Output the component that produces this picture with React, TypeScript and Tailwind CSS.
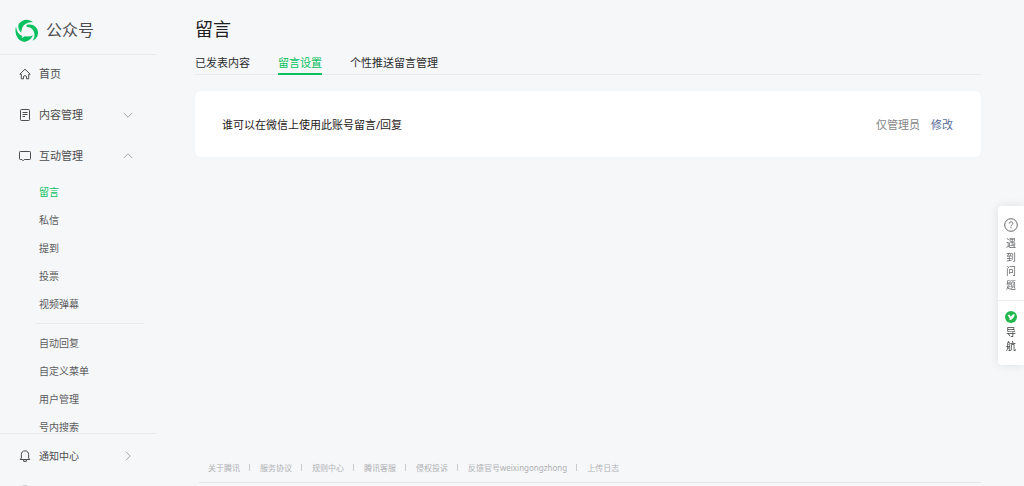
import { useState } from "react";
import type { ReactNode } from "react";

const interactionItems = ["留言", "私信", "提到", "投票", "视频弹幕"];
const toolItems = ["自动回复", "自定义菜单", "用户管理", "号内搜索"];
const tabs = ["已发表内容", "留言设置", "个性推送留言管理"];
const footerLinks = [
  "关于腾讯",
  "服务协议",
  "规则中心",
  "腾讯客服",
  "侵权投诉",
  "反馈官号weixingongzhong",
  "上传日志",
];

function Logo() {
  return (
    <svg viewBox="0 0 68 68" className="size-[23px]" fill="#07c160" aria-hidden="true">
      <path d="M11 15C20 1 40 -3 54 10C40 9 26 14 21 28C19 33 18 37 19 41C11 35 8 24 11 15Z" />
      <path d="M3 22C5 38 13 48 22 50L19 57L29 51C38 53 46 52 53 48C47 62 34 69 24 67C8 64 -3 44 3 22Z" />
      <path d="M36 17C54 13 66 24 68 38C69 50 62 60 52 64C59 54 59 44 55 36C51 28 44 24 36 24C33 22 33 19 36 17Z" />
    </svg>
  );
}

function Icon({ children }: { children: ReactNode }) {
  return (
    <svg
      viewBox="0 0 12 12"
      className="size-3 shrink-0"
      fill="none"
      stroke="#4c4d4e"
      strokeWidth="1"
      strokeLinejoin="round"
      aria-hidden="true"
    >
      {children}
    </svg>
  );
}

function Chevron({ d }: { d: string }) {
  return (
    <svg
      viewBox="0 0 10 10"
      className="ml-auto size-[10px]"
      fill="none"
      stroke="#a3a4a5"
      strokeWidth="1"
      aria-hidden="true"
    >
      <path d={d} />
    </svg>
  );
}

interface SubMenuProps {
  items: string[];
  active: string;
  onSelect: (item: string) => void;
}

function SubMenu(props: SubMenuProps) {
  return (
    <ul>
      {props.items.map((item) => (
        <li key={item}>
          <button
            type="button"
            onClick={() => props.onSelect(item)}
            className={`block h-7 cursor-pointer pl-[39px] text-[10px] ${
              item === props.active ? "text-[#07c160]" : "text-[#5b5c5d]"
            }`}
          >
            {item}
          </button>
        </li>
      ))}
    </ul>
  );
}

function Sidebar() {
  const [active, setActive] = useState("留言");
  const [open, setOpen] = useState(true);
  const row =
    "flex h-5 w-full cursor-pointer items-center gap-2 pl-[19px] pr-[23px] text-[11px] text-[#4c4d4e]";
  return (
    <aside className="flex h-full w-[156px] shrink-0 flex-col">
      <div className="flex h-[55px] shrink-0 items-center gap-2 border-b border-[#e9eaec] pl-[15px] pt-1.5 text-base text-[#4c4d4e]">
        <Logo />
        公众号
      </div>
      <nav className="min-h-0 flex-1 overflow-hidden pt-[9px]">
        <div className="flex flex-col gap-[21px]">
          <a href="#home" className={row}>
            <Icon>
              <path d="M0.800 6.200L6 1.200L11.200 6.200H9.700V10.800H7.500V8.300Q6 6.900 4.500 8.300V10.800H2.300V6.200Z" />
            </Icon>
            首页
          </a>
          <button type="button" className={row}>
            <Icon>
              <rect x="1.500" y="0.500" width="9" height="11" rx="0.800" />
              <path d="M3.500 3.500H8.500M3.500 5.500H8.500M3.500 7.500H6" />
            </Icon>
            内容管理
            <Chevron d="M0.800 3L5 7.200L9.200 3" />
          </button>
          <button
            type="button"
            className={row}
            aria-expanded={open}
            onClick={() => setOpen(!open)}
          >
            <Icon>
              <path d="M1.300 1.500H10.700Q11.500 1.500 11.500 2.300V8.700Q11.500 9.500 10.700 9.500H5.300L4 10.800L3 9.500H1.300Q0.500 9.500 0.500 8.700V2.300Q0.500 1.500 1.300 1.500Z" />
            </Icon>
            互动管理
            <Chevron d={open ? "M0.800 7L5 2.800L9.200 7" : "M0.800 3L5 7.200L9.200 3"} />
          </button>
        </div>
        {open && (
          <div className="pt-3">
            <SubMenu items={interactionItems} active={active} onSelect={setActive} />
            <hr className="my-[5px] ml-9 mr-3 border-[#e9eaec]" />
            <SubMenu items={toolItems} active={active} onSelect={setActive} />
          </div>
        )}
      </nav>
      <div className="h-[53px] shrink-0 overflow-hidden border-t border-[#e9eaec] pt-3">
        <button
          type="button"
          className="flex h-5 w-full cursor-pointer items-center gap-2 pl-[19px] pr-[23px] text-[10px] text-[#4c4d4e]"
        >
          <Icon>
            <path d="M1.200 9.500H10.800L9.600 8V4.500C9.600 2.200 8.200 0.900 6 0.900S2.400 2.200 2.400 4.500V8ZM4.700 10V11.400H7.300V10" />
          </Icon>
          通知中心
          <Chevron d="M3 0.800L7.200 5L3 9.200" />
        </button>
        <div className="ml-5 mt-[19px] size-[10px] rounded-full bg-[#c9cacb]"></div>
      </div>
    </aside>
  );
}

function HelpPanel() {
  const button =
    "flex w-full cursor-pointer flex-col items-center text-[10px] leading-[14px]";
  return (
    <div className="fixed right-0 top-[206px] w-[26px] rounded-l-sm bg-white shadow-[0_0_10px_rgba(0,0,0,0.1)]">
      <button
        type="button"
        className={`${button} gap-1 border-b border-[#ececec] px-2 pb-2 pt-3 text-[#66676a]`}
      >
        <svg viewBox="0 0 14 14" className="size-[14px]" fill="none" stroke="#66676a" aria-hidden="true">
          <circle cx="7" cy="7" r="6.300" />
          <path d="M5.200 5.600C5.200 3.300 8.800 3.300 8.800 5.500C8.800 6.800 7 6.800 7 8.300M7 9.300V10.400" />
        </svg>
        <span className="w-[10px]">遇到问题</span>
      </button>
      <button type="button" className={`${button} gap-0.5 px-2 pb-3 pt-2.5 text-[#3b3c3d]`}>
        <svg viewBox="0 0 12 12" className="size-3" aria-hidden="true">
          <circle cx="6" cy="6" r="6" fill="#22b84c" />
          <path d="M2.600 4.200L4.400 3.600L5.600 5.400L8.300 3.200L9.800 3.500C9.300 6.200 7.400 8.600 4.300 9.200L4.700 7.200Z" fill="#fff" />
        </svg>
        <span className="w-[10px]">导航</span>
      </button>
    </div>
  );
}

function App() {
  const [tab, setTab] = useState("留言设置");
  return (
    <div className="flex h-screen overflow-hidden bg-[#f6f7f9] font-['Noto_Sans','Noto_Sans_CJK_SC',sans-serif]">
      <Sidebar />
      <main className="flex min-w-0 flex-1 flex-col pl-[39px] pr-[43px]">
        <h1 className="pt-4 text-lg leading-[26px] text-[#1f2021]">留言</h1>
        <div className="mt-3 flex gap-7 border-b border-[#e9eaec]">
          {tabs.map((item) => (
            <button
              key={item}
              type="button"
              onClick={() => setTab(item)}
              className={`-mb-px h-[21px] cursor-pointer border-b-2 pb-0.5 text-[11px] leading-4 ${
                item === tab
                  ? "border-[#07c160] text-[#07c160]"
                  : "border-transparent text-[#2b2c2d]"
              }`}
            >
              {item}
            </button>
          ))}
        </div>
        <section className="mt-4 flex h-[66px] items-center rounded-md bg-white pl-[27px] pr-7 pt-0.5 text-[11px] shadow-[0_0_6px_rgba(0,0,0,0.02)]">
          <span className="text-[#1f2021]">谁可以在微信上使用此账号留言/回复</span>
          <span className="ml-auto text-[#858687]">仅管理员</span>
          <button type="button" className="ml-[11px] cursor-pointer text-[#576b95]">
            修改
          </button>
        </section>
        <footer className="mb-[3px] ml-1 mt-auto border-b border-[#e3e4e6] pb-2 pl-[9px]">
          <ul className="flex text-[8px] leading-3 text-[#b0b1b3]">
            {footerLinks.map((item, i) => (
              <li key={item} className="flex">
                {i > 0 && <span className="ml-[9px] mr-2.5 mt-0.5 h-[7px] w-px bg-[#c9cacc]"></span>}
                <a href="#footer">{item}</a>
              </li>
            ))}
          </ul>
        </footer>
      </main>
      <HelpPanel />
    </div>
  );
}

export default App;
